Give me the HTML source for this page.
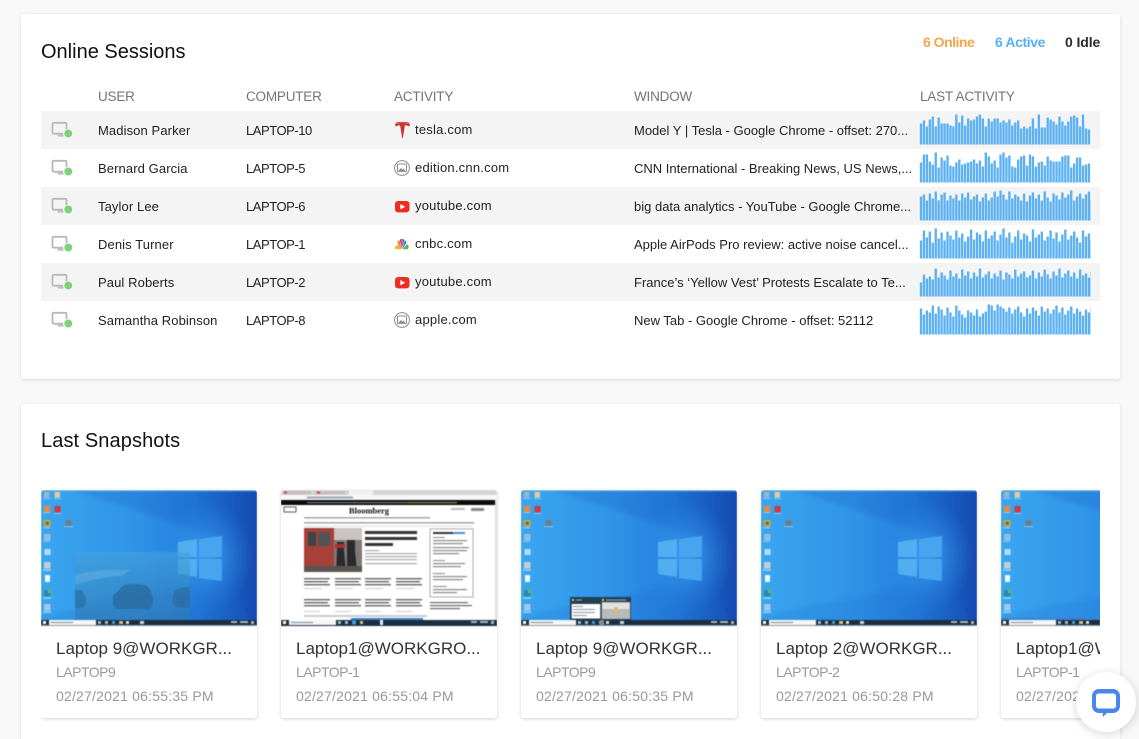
<!DOCTYPE html>
<html lang="en">
<head>
<meta charset="utf-8">
<title>Online Sessions</title>
<style>
html,body{margin:0;padding:0;width:1139px;height:739px;overflow:hidden}
body{position:relative;background:#f8f8f8;font-family:"Liberation Sans",sans-serif;color:#222}
.a{position:absolute;white-space:nowrap}
.card{position:absolute;background:#fff;border-radius:3px;box-shadow:0 1px 3px rgba(0,0,0,.13)}
.h1{font-size:20px;line-height:24px;color:#111}
.th{font-size:13.5px;line-height:16px;color:#757575;top:89px;letter-spacing:-.2px}
.row{position:absolute;left:41px;width:1059px;height:38px}
.alt{background:#f4f4f4}
.t{font-size:13px;line-height:16px;color:#222;letter-spacing:.1px}
.c{font-size:13px;line-height:16px;color:#222;letter-spacing:-.45px}
.w{font-size:13px;line-height:16px;color:#222}
.site{font-size:13px;line-height:16px;color:#222;letter-spacing:.22px}
.snap{position:absolute;top:490px;width:216px;height:228px;background:#fff;border-radius:3px;box-shadow:0 1px 3px rgba(0,0,0,.18);overflow:hidden}
.snap svg{display:block;width:216px;height:136px;filter:blur(.45px)}
.ti{position:absolute;left:15px;top:149px;font-size:17px;line-height:20px;color:#333;white-space:nowrap}
.s1{position:absolute;left:15px;top:174px;font-size:14px;line-height:16px;color:#999;white-space:nowrap;letter-spacing:-.5px}
.s2{position:absolute;left:15px;top:198px;font-size:14px;line-height:16px;color:#999;white-space:nowrap;letter-spacing:.2px}
.clip{position:absolute;left:41px;top:480px;width:1059px;height:259px;overflow:hidden}
.clip .snap{top:10px}
</style>
</head>
<body>
<svg width="0" height="0" style="position:absolute">
<defs>
<linearGradient id="bg" x1="0" y1="0" x2="1" y2="0"><stop offset="0" stop-color="#3aa5ef"/><stop offset=".45" stop-color="#2f93e8"/><stop offset=".72" stop-color="#227ada"/><stop offset="1" stop-color="#1549b2"/></linearGradient>
<radialGradient id="glow" cx=".5" cy=".5" r=".5"><stop offset="0" stop-color="#3fa6f4" stop-opacity=".8"/><stop offset="1" stop-color="#2b8ee6" stop-opacity="0"/></radialGradient>
<linearGradient id="car" x1="0" y1="0" x2="0" y2="1"><stop offset="0" stop-color="#45a2dc"/><stop offset=".5" stop-color="#3a8cc4"/><stop offset="1" stop-color="#3176ad"/></linearGradient>
<filter id="b3" x="-20%" y="-20%" width="140%" height="140%"><feGaussianBlur stdDeviation="2"/></filter>
<clipPath id="sparkclip"><rect x="919" y="100" width="172" height="240"/></clipPath>
<symbol id="wall" viewBox="0 0 216 136">
<rect width="216" height="136" fill="url(#bg)"/>
<polygon points="32,0 216,0 216,136 179,47" fill="#174fb6" opacity=".2" filter="url(#b3)"/>
<polygon points="179,90 216,136 0,136 0,126" fill="#1a66c8" opacity=".18" filter="url(#b3)"/>
<rect y="0" width="216" height="1.200" fill="#6fb2ea"/>
<ellipse cx="165" cy="66" rx="48" ry="56" fill="url(#glow)"/>
<polygon points="137,52 156,49 156,67 137,67" fill="#52aef0"/>
<polygon points="158,49 181,46 181,67 158,67" fill="#47a5f0"/>
<polygon points="137,69 156,69 156,87 137,84" fill="#52aef0"/>
<polygon points="158,69 181,69 181,91 158,88" fill="#47a5f0"/>
<g>
<rect x="3" y="2" width="5.500" height="5.500" fill="#9fb5c8"/><rect x="13.500" y="2" width="5.500" height="5.500" fill="#e8c9a0"/>
<rect x="3" y="16" width="6" height="6" fill="#e88a3c"/><rect x="13.500" y="16" width="6" height="6.500" fill="#d13a3a"/>
<rect x="3" y="30" width="6.500" height="6.500" fill="#e0a030"/><circle cx="6.200" cy="33.200" r="1.800" fill="#3a8c5c"/><rect x="24.500" y="30" width="6" height="6" fill="#6c7a90"/>
<rect x="3" y="44" width="6.500" height="6.500" fill="#8fc0e4"/>
<rect x="3.500" y="59" width="6" height="6" fill="#b8dcf4"/>
<rect x="3" y="72" width="6.500" height="6.500" fill="#c0d0dc"/>
<rect x="4" y="85" width="5" height="7" fill="#f4f8fb"/>
<rect x="3" y="100" width="6.500" height="6.500" fill="#2c8c9c"/><rect x="7" y="100" width="3" height="3" fill="#60c060"/>
<rect x="3" y="114" width="6.500" height="6.500" fill="#a0c8e8"/>
<g fill="#cfe6f8" opacity=".55"><rect x="2" y="8" width="7" height="1"/><rect x="13" y="8" width="7" height="1"/><rect x="2" y="22" width="7" height="1"/><rect x="13" y="23" width="7" height="1"/><rect x="2" y="37" width="7" height="1.400"/><rect x="23" y="36" width="9" height="1"/><rect x="2" y="51" width="7" height="1"/><rect x="2" y="79" width="8" height="2"/><rect x="2" y="107" width="8" height="2"/><rect x="2" y="121" width="8" height="2"/></g>
</g>
<rect y="130" width="216" height="6" fill="#1c2e40"/>
<rect x="0" y="135" width="216" height="1" fill="#8a97a4"/>
<rect x="2" y="131" width="3" height="3" fill="#fff"/>
<rect x="8" y="130" width="47" height="5" fill="#f4f6f8"/>
<rect x="10" y="132" width="22" height="1" fill="#7b8794"/>
<g fill="#aab6c2"><rect x="57" y="131" width="3" height="3"/><rect x="64" y="131" width="3" height="3"/><rect x="190" y="131" width="6" height="2"/><rect x="199" y="131" width="8" height="2"/><rect x="210" y="131" width="3" height="3"/><rect x="78" y="131" width="2" height="3"/></g>
<rect x="71" y="131" width="3" height="3" fill="#3aa0d8"/><rect x="79" y="131" width="3" height="3" fill="#e8c060"/><rect x="85" y="131" width="3" height="3" fill="#dcdcdc"/><rect x="99" y="131" width="4" height="3" fill="#cfd8e0"/>
</symbol>
</defs>
</svg>

<div class="card" style="left:21px;top:14px;width:1099px;height:365px"></div>
<div class="card" style="left:21px;top:404px;width:1099px;height:335px;border-radius:3px 3px 0 0"></div>

<div class="a h1" style="left:41px;top:40px">Online Sessions</div>
<div class="a" style="left:923px;top:34px;font-size:14px;line-height:16px;font-weight:bold;color:#f2a54c;letter-spacing:-.5px">6 Online</div>
<div class="a" style="left:995px;top:34px;font-size:14px;line-height:16px;font-weight:bold;color:#57aef2;letter-spacing:-.4px">6 Active</div>
<div class="a" style="left:1065px;top:34px;font-size:14px;line-height:16px;font-weight:bold;color:#2b2b2b;letter-spacing:-.1px">0 Idle</div>

<div class="a th" style="left:98px">USER</div>
<div class="a th" style="left:246px">COMPUTER</div>
<div class="a th" style="left:394px">ACTIVITY</div>
<div class="a th" style="left:634px">WINDOW</div>
<div class="a th" style="left:920px">LAST ACTIVITY</div>

<div class="row alt" style="top:111px"></div>
<div class="row alt" style="top:187px"></div>
<div class="row alt" style="top:263px"></div>

<div class="a t" style="left:98px;top:123px">Madison Parker</div>
<div class="a c" style="left:246px;top:123px">LAPTOP-10</div>
<div class="a site" style="left:415px;top:122px">tesla.com</div>
<div class="a w" style="left:634px;top:123px">Model Y | Tesla - Google Chrome - offset: 270...</div>

<div class="a t" style="left:98px;top:161px">Bernard Garcia</div>
<div class="a c" style="left:246px;top:161px">LAPTOP-5</div>
<div class="a site" style="left:415px;top:160px">edition.cnn.com</div>
<div class="a w" style="left:634px;top:161px">CNN International - Breaking News, US News,...</div>

<div class="a t" style="left:98px;top:199px">Taylor Lee</div>
<div class="a c" style="left:246px;top:199px">LAPTOP-6</div>
<div class="a site" style="left:415px;top:198px">youtube.com</div>
<div class="a w" style="left:634px;top:199px">big data analytics - YouTube - Google Chrome...</div>

<div class="a t" style="left:98px;top:237px">Denis Turner</div>
<div class="a c" style="left:246px;top:237px">LAPTOP-1</div>
<div class="a site" style="left:415px;top:236px">cnbc.com</div>
<div class="a w" style="left:634px;top:237px">Apple AirPods Pro review: active noise cancel...</div>

<div class="a t" style="left:98px;top:275px">Paul Roberts</div>
<div class="a c" style="left:246px;top:275px">LAPTOP-2</div>
<div class="a site" style="left:415px;top:274px">youtube.com</div>
<div class="a w" style="left:634px;top:275px">France’s ‘Yellow Vest’ Protests Escalate to Te...</div>

<div class="a t" style="left:98px;top:313px">Samantha Robinson</div>
<div class="a c" style="left:246px;top:313px">LAPTOP-8</div>
<div class="a site" style="left:415px;top:312px">apple.com</div>
<div class="a w" style="left:634px;top:313px">New Tab - Google Chrome - offset: 52112</div>

<svg class="a" style="left:0;top:0" width="1139" height="400" viewBox="0 0 1139 400">
<defs>
<g id="mon">
<path d="M66.500 129.500V124a1.200 1.200 0 0 0-1.200-1.200H53.700a1.200 1.200 0 0 0-1.200 1.200v8.500a1.200 1.200 0 0 0 1.200 1.200H63" fill="none" stroke="#b8b8b8" stroke-width="1.800"/>
<rect x="57.500" y="134.500" width="6" height="2.200" fill="#c0c0c0"/>
<circle cx="68.300" cy="133.500" r="4.800" fill="#fff" opacity=".75"/>
<circle cx="68.300" cy="133.500" r="4" fill="#7ed27c"/>
</g>
<g id="globe">
<circle cx="402" cy="168" r="7.400" fill="none" stroke="#8e8e8e" stroke-width="1"/>
<rect x="397.500" y="164" width="9" height="7.600" rx="1" fill="none" stroke="#8e8e8e" stroke-width="1"/>
<path d="M398.500 171l2.200-3 1.600 1.600 1.200-1.200 2 2.600z" fill="#8e8e8e"/>
</g>
<g id="yt">
<rect x="395" y="201" width="14.500" height="11.400" rx="3" fill="#ee2c22"/>
<path d="M400.300 204l5 2.700-5 2.700z" fill="#fff"/>
</g>
</defs>
<use href="#mon"/><use href="#mon" y="38"/><use href="#mon" y="76"/><use href="#mon" y="114"/><use href="#mon" y="152"/><use href="#mon" y="190"/>

<path d="M395 124.200c4.500-1.800 10.500-1.800 15 0l-.7 2.400c-1.300-.8-2.800-1.200-4.400-1.300l-2.100 13h-.6l-2.100-13c-1.600.1-3.100.5-4.400 1.300z" fill="#c9322e"/>
<path d="M395.500 122.800c4.400-1.300 9.600-1.300 14 0l-.2.800c-4.400-1.100-9.200-1.100-13.600 0z" fill="#c9322e"/>
<use href="#globe"/><use href="#globe" y="152"/>
<use href="#yt"/><use href="#yt" y="76"/>

<g>
<path d="M401.700 249.200h-5.200c-1.700 0-2.200-2.200-.8-3.100l3.400-2z" fill="#f5b43c"/>
<path d="M401.700 249.200l-3.800-6c-.9-1.400 0-3 1.500-2.800z" fill="#ef7a35"/>
<path d="M401.800 248.800l-2-8.400c0-1 1-1.700 2-1.200z" fill="#d8365c"/>
<path d="M402.200 248.800v-9.600c1-.5 2-.2 2 1.200z" fill="#7a5aa8"/>
<path d="M402.500 249.200l2-8.700c1.500-.2 2.400 1.400 1.500 2.800z" fill="#2a86c8"/>
<path d="M402.500 249.200l4.400-5c1.500.5 2.700 2.900.8 5z" fill="#62b24c"/>
</g>

<g clip-path="url(#sparkclip)"><g fill="none" stroke="#5cb1f5" stroke-width="2.400">
<path transform="translate(921,144.500) scale(.982,1)" d="M0 0v-21m3 21v-24m3 24v-18m3 18v-25m3 25v-28m3 28v-18m3 18v-27m3 27v-21m3 21v-21m3 21v-21m3 21v-19m3 19v-18m3 18v-30m3 30v-22m3 22v-29m3 29v-19m3 19v-26m3 26v-24m3 24v-25m3 25v-28m3 28v-30m3 30v-26m3 26v-18m3 18v-26m3 26v-23m3 23v-26m3 26v-26m3 26v-22m3 22v-24m3 24v-22m3 22v-25m3 25v-19m3 19v-22m3 22v-24m3 24v-16m3 16v-18m3 18v-16m3 16v-18m3 18v-26m3 26v-16m3 16v-30m3 30v-17m3 17v-17m3 17v-27m3 27v-25m3 25v-23m3 23v-20m3 20v-28m3 28v-23m3 23v-19m3 19v-23m3 23v-28m3 28v-29m3 29v-27m3 27v-18m3 18v-30m3 30v-16m3 16v-15"/>
<path transform="translate(921,182.500) scale(.982,1)" d="M0 0v-20m3 20v-28m3 28v-28m3 28v-21m3 21v-18m3 18v-30m3 30v-15m3 15v-25m3 25v-22m3 22v-27m3 27v-17m3 17v-16m3 16v-20m3 20v-23m3 23v-18m3 18v-19m3 19v-20m3 20v-21m3 21v-23m3 23v-19m3 19v-22m3 22v-16m3 16v-30m3 30v-26m3 26v-19m3 19v-22m3 22v-15m3 15v-28m3 28v-30m3 30v-25m3 25v-27m3 27v-16m3 16v-15m3 15v-23m3 23v-26m3 26v-27m3 27v-17m3 17v-28m3 28v-26m3 26v-16m3 16v-20m3 20v-21m3 21v-17m3 17v-26m3 26v-22m3 22v-21m3 21v-21m3 21v-21m3 21v-26m3 26v-27m3 27v-27m3 27v-15m3 15v-19m3 19v-25m3 25v-25m3 25v-17m3 17v-18m3 18v-19"/>
<path transform="translate(921,220.500) scale(.982,1)" d="M0 0v-24m3 24v-26m3 26v-20m3 20v-27m3 27v-22m3 22v-29m3 29v-20m3 20v-26m3 26v-28m3 28v-20m3 20v-25m3 25v-22m3 22v-26m3 26v-20m3 20v-27m3 27v-23m3 23v-28m3 28v-21m3 21v-24m3 24v-26m3 26v-19m3 19v-23m3 23v-27m3 27v-20m3 20v-23m3 23v-29m3 29v-24m3 24v-30m3 30v-26m3 26v-21m3 21v-29m3 29v-22m3 22v-26m3 26v-24m3 24v-20m3 20v-27m3 27v-19m3 19v-25m3 25v-28m3 28v-22m3 22v-26m3 26v-20m3 20v-29m3 29v-23m3 23v-19m3 19v-27m3 27v-25m3 25v-21m3 21v-28m3 28v-23m3 23v-26m3 26v-30m3 30v-20m3 20v-24m3 24v-27m3 27v-22m3 22v-26m3 26v-29m3 29v-21m3 21v-25"/>
<path transform="translate(921,258.500) scale(.982,1)" d="M0 0v-18m3 18v-28m3 28v-21m3 21v-27m3 27v-16m3 16v-30m3 30v-20m3 20v-26m3 26v-18m3 18v-27m3 27v-23m3 23v-19m3 19v-28m3 28v-21m3 21v-25m3 25v-17m3 17v-22m3 22v-29m3 29v-19m3 19v-26m3 26v-24m3 24v-17m3 17v-28m3 28v-20m3 20v-23m3 23v-27m3 27v-18m3 18v-24m3 24v-30m3 30v-21m3 21v-26m3 26v-16m3 16v-22m3 22v-28m3 28v-19m3 19v-25m3 25v-23m3 23v-17m3 17v-29m3 29v-21m3 21v-24m3 24v-27m3 27v-18m3 18v-22m3 22v-28m3 28v-20m3 20v-26m3 26v-17m3 17v-24m3 24v-29m3 29v-19m3 19v-23m3 23v-27m3 27v-21m3 21v-16m3 16v-28m3 28v-22m3 22v-25m3 25v-18m3 18v-23"/>
<path transform="translate(921,296.500) scale(.982,1)" d="M0 0v-14m3 14v-22m3 22v-18m3 18v-20m3 20v-17m3 17v-28m3 28v-19m3 19v-24m3 24v-21m3 21v-17m3 17v-26m3 26v-20m3 20v-23m3 23v-18m3 18v-27m3 27v-21m3 21v-25m3 25v-18m3 18v-24m3 24v-20m3 20v-28m3 28v-19m3 19v-22m3 22v-25m3 25v-18m3 18v-23m3 23v-20m3 20v-26m3 26v-17m3 17v-24m3 24v-22m3 22v-18m3 18v-27m3 27v-20m3 20v-23m3 23v-25m3 25v-19m3 19v-21m3 21v-26m3 26v-18m3 18v-24m3 24v-20m3 20v-27m3 27v-22m3 22v-18m3 18v-25m3 25v-21m3 21v-28m3 28v-19m3 19v-23m3 23v-26m3 26v-20m3 20v-24m3 24v-18m3 18v-27m3 27v-21m3 21v-23m3 23v-19m3 19v-25"/>
<path transform="translate(921,334.500) scale(.982,1)" d="M0 0v-26m3 26v-20m3 20v-24m3 24v-22m3 22v-29m3 29v-21m3 21v-28m3 28v-25m3 25v-19m3 19v-27m3 27v-22m3 22v-18m3 18v-29m3 29v-24m3 24v-20m3 20v-17m3 17v-24m3 24v-22m3 22v-19m3 19v-25m3 25v-18m3 18v-21m3 21v-23m3 23v-30m3 30v-29m3 29v-24m3 24v-30m3 30v-28m3 28v-26m3 26v-23m3 23v-27m3 27v-21m3 21v-25m3 25v-28m3 28v-22m3 22v-18m3 18v-26m3 26v-21m3 21v-27m3 27v-24m3 24v-19m3 19v-28m3 28v-23m3 23v-26m3 26v-21m3 21v-25m3 25v-29m3 29v-22m3 22v-27m3 27v-20m3 20v-24m3 24v-28m3 28v-21m3 21v-26m3 26v-23m3 23v-19m3 19v-25m3 25v-22m3 22v-27m3 27v-20m3 20v-24"/>
</g></g>
</svg>

<div class="a h1" style="left:41px;top:429px;letter-spacing:.1px">Last Snapshots</div>

<div class="clip">
<div class="snap" style="left:0">
<svg viewBox="0 0 216 136">
<use href="#wall" width="216" height="136"/>
<rect x="34" y="62" width="115" height="68" fill="url(#car)" opacity=".6"/>
<path d="M72 106c2-3 5-4 7-7 2-4 7-5 14-5 8 0 13 1 16 5l2 5c1 3 1.500 6 .5 10-.5 3-1 4-3 5H76c-3-1-4-4-4-8z" fill="#2a6a9e" opacity=".75"/>
<path d="M34 100h6c3 3 5 7 5 12-.5 4-2 5-5 6h-6z" fill="#2a6a9e" opacity=".6"/>
<path d="M133 102c3-4 10-5 16-5v20c-6 1-13 1-16-1-2-4-2-10 0-14z" fill="#2a6a9e" opacity=".65"/>
<path d="M34 85c20-5 40-6 55-5l-8 6c-15 0-30 4-47 9z" fill="#8cc4e6" opacity=".3"/>
</svg>
<div class="ti">Laptop 9@WORKGR...</div><div class="s1">LAPTOP9</div><div class="s2">02/27/2021 06:55:35 PM</div>
</div>

<div class="snap" style="left:240px">
<svg viewBox="0 0 216 136">
<rect width="216" height="136" fill="#fff"/>
<rect width="216" height="5" fill="#d4d4d4"/>
<rect x="2" y="1" width="28" height="3.500" fill="#c9bcbc"/><rect x="34" y="1" width="30" height="3.500" fill="#c8bcbc"/><rect x="68" y="0.500" width="24" height="4.500" fill="#f2f2f2"/>
<rect x="3" y="1.500" width="3" height="2" fill="#d0413a"/><rect x="36" y="1.500" width="3" height="2" fill="#d0413a"/>
<rect y="5" width="216" height="5" fill="#f7f7f7"/><rect x="26" y="6.500" width="46" height="2" fill="#9aa6b2"/>
<rect y="10" width="214" height="5" fill="#0c0c0c"/><rect x="26" y="12" width="100" height="1.200" fill="#7a7a7a"/><rect x="126" y="12" width="50" height="1.200" fill="#8f8f50"/>
<rect x="214" y="10" width="2" height="120" fill="#dcdcdc"/>
<text x="88" y="23.500" text-anchor="middle" font-family="Liberation Serif,serif" font-weight="bold" font-size="8.500" fill="#111">Bloomberg</text>
<rect x="3" y="17" width="12" height="5" fill="#fff" stroke="#333" stroke-width=".8"/>
<rect x="190" y="18" width="13" height="3" fill="#888"/><rect x="170" y="18" width="14" height="2" fill="#bbb"/>
<g fill="#aaa"><rect x="23" y="27" width="126" height="1.600"/><rect x="23" y="32" width="170" height="1.600"/></g>
<rect x="23" y="36" width="169" height=".6" fill="#ccc"/>
<rect x="23" y="38" width="58" height="44" fill="#7e7a78"/>
<rect x="23" y="38" width="30" height="38" fill="#a8403a"/>
<rect x="27" y="42" width="8" height="14" fill="#3e4448"/><rect x="37" y="42" width="12" height="14" fill="#4e5458"/>
<rect x="53" y="38" width="28" height="12" fill="#c9c4c0"/>
<path d="M56 52h7v8l2 22h-10l1-22zM66 50h8v10l2 22H66z" fill="#2a2a2e"/>
<rect x="54" y="54" width="10" height="4" fill="#b03030"/>
<rect x="23" y="76" width="58" height="6" fill="#5a5450"/>
<g fill="#333"><rect x="84" y="41" width="52" height="3"/><rect x="84" y="47" width="52" height="3"/><rect x="84" y="53" width="28" height="3"/></g>
<g fill="#aaa"><rect x="84" y="60" width="14" height="1.200"/><rect x="84" y="63" width="52" height="1.200"/><rect x="84" y="66" width="52" height="1.200"/><rect x="84" y="69" width="52" height="1.200"/><rect x="84" y="73" width="52" height="1.200"/></g>
<rect x="149" y="39" width="43" height="68" fill="#fff" stroke="#888" stroke-width=".7"/>
<rect x="152" y="42" width="20" height="2" fill="#333"/><rect x="172" y="42" width="12" height="2" fill="#4a8ce0"/>
<g fill="#888"><rect x="152" y="47" width="12" height="1"/><rect x="152" y="50" width="34" height="1.200"/><rect x="152" y="53" width="30" height="1.200"/><rect x="152" y="57" width="36" height="1.200"/><rect x="152" y="60" width="34" height="1.200"/><rect x="152" y="63" width="26" height="1.200"/><rect x="152" y="70" width="12" height="1"/><rect x="152" y="73" width="32" height="1.200"/><rect x="152" y="76" width="28" height="1.200"/><rect x="152" y="83" width="12" height="1"/><rect x="152" y="86" width="34" height="1.200"/><rect x="152" y="89" width="30" height="1.200"/><rect x="152" y="96" width="14" height="1"/><rect x="152" y="99" width="34" height="1.200"/><rect x="152" y="102" width="24" height="1.200"/></g>
<g fill="#666">
<rect x="23" y="88" width="26" height="1.400"/><rect x="23" y="91" width="24" height="1.400"/><rect x="23" y="94" width="26" height="1.400"/>
<rect x="54" y="88" width="26" height="1.400"/><rect x="54" y="91" width="24" height="1.400"/><rect x="54" y="94" width="26" height="1.400"/>
<rect x="84" y="88" width="26" height="1.400"/><rect x="84" y="91" width="24" height="1.400"/><rect x="84" y="94" width="26" height="1.400"/>
<rect x="115" y="88" width="26" height="1.400"/><rect x="115" y="91" width="24" height="1.400"/><rect x="115" y="94" width="26" height="1.400"/>
<rect x="23" y="109" width="26" height="1.400"/><rect x="23" y="112" width="24" height="1.400"/><rect x="23" y="115" width="26" height="1.400"/>
<rect x="54" y="109" width="26" height="1.400"/><rect x="54" y="112" width="24" height="1.400"/><rect x="54" y="115" width="26" height="1.400"/>
<rect x="84" y="109" width="26" height="1.400"/><rect x="84" y="112" width="24" height="1.400"/><rect x="84" y="115" width="26" height="1.400"/>
<rect x="115" y="109" width="26" height="1.400"/><rect x="115" y="112" width="24" height="1.400"/><rect x="115" y="115" width="26" height="1.400"/>
<rect x="149" y="112" width="38" height="1.200"/><rect x="149" y="115" width="42" height="1.200"/><rect x="149" y="118" width="30" height="1.200"/>
</g>
<g fill="#ccc"><rect x="23" y="98" width="18" height="1"/><rect x="54" y="98" width="18" height="1"/><rect x="84" y="98" width="18" height="1"/><rect x="115" y="98" width="18" height="1"/><rect x="23" y="121" width="16" height="1"/><rect x="54" y="121" width="16" height="1"/><rect x="84" y="121" width="16" height="1"/><rect x="115" y="121" width="16" height="1"/><rect x="23" y="125" width="123" height="2"/></g>
<rect x="70" y="128" width="72" height="2" fill="#3a82d0"/>
<rect y="130" width="216" height="6" fill="#1c2e40"/>
<rect x="2" y="131" width="3" height="3" fill="#fff"/>
<rect x="8" y="130" width="47" height="5" fill="#f4f6f8"/>
<rect x="10" y="132" width="22" height="1" fill="#7b8794"/>
<g fill="#aab6c2"><rect x="57" y="131" width="3" height="3"/><rect x="64" y="131" width="3" height="3"/><rect x="190" y="131" width="6" height="2"/><rect x="199" y="131" width="8" height="2"/><rect x="210" y="131" width="3" height="3"/></g>
<rect x="71" y="130.500" width="4" height="4" fill="#3aa0d8"/><rect x="79" y="131" width="3" height="3" fill="#e8c060"/><rect x="99" y="130" width="3" height="5" fill="#e8eef4"/>
</svg>
<div class="ti">Laptop1@WORKGRO...</div><div class="s1">LAPTOP-1</div><div class="s2">02/27/2021 06:55:04 PM</div>
</div>

<div class="snap" style="left:480px">
<svg viewBox="0 0 216 136">
<use href="#wall" width="216" height="136"/>
<rect x="49" y="107" width="61" height="23" fill="#23404f"/>
<rect x="50.700" y="114" width="28.500" height="14.500" fill="#fff"/>
<g fill="#8a96a0"><rect x="52" y="116" width="10" height="1"/><rect x="52" y="119" width="22" height="1"/><rect x="52" y="122" width="22" height="1"/><rect x="52" y="125" width="14" height="1"/></g>
<rect x="80.700" y="112" width="28.500" height="17" fill="#b9b9b9"/>
<rect x="81.500" y="113" width="27" height="6" fill="#e2e2e2"/>
<rect x="93.500" y="117" width="3" height="6" fill="#e0c050"/>
<rect x="51" y="109" width="2" height="2" fill="#e8c060"/><rect x="81" y="109" width="2" height="2" fill="#e8c060"/>
<rect x="55" y="109.500" width="6" height="1" fill="#9fb0bc"/><rect x="85" y="109.500" width="20" height="1" fill="#9fb0bc"/>
<rect x="79" y="130" width="4" height="6" fill="#7f8b96"/>
</svg>
<div class="ti">Laptop 9@WORKGR...</div><div class="s1">LAPTOP9</div><div class="s2">02/27/2021 06:50:35 PM</div>
</div>

<div class="snap" style="left:720px">
<svg viewBox="0 0 216 136"><use href="#wall" width="216" height="136"/></svg>
<div class="ti">Laptop 2@WORKGR...</div><div class="s1">LAPTOP-2</div><div class="s2">02/27/2021 06:50:28 PM</div>
</div>

<div class="snap" style="left:960px">
<svg viewBox="0 0 216 136"><use href="#wall" width="216" height="136"/><rect x="0" y="128" width="216" height="2" fill="#3a82d0"/></svg>
<div class="ti">Laptop1@WORKGRO...</div><div class="s1">LAPTOP-1</div><div class="s2">02/27/2021 06:45:04 PM</div>
</div>
</div>

<div class="a" style="left:1076px;top:672px;width:60px;height:60px;border-radius:50%;background:#fff;box-shadow:0 2px 10px rgba(0,0,0,.16)"></div>
<svg class="a" style="left:1085px;top:683px" width="40" height="40" viewBox="1085 683 40 40">
<path fill-rule="evenodd" d="M1099 689h14a7 7 0 0 1 7 7v10a7 7 0 0 1-7 7h-6l-4.200 4v-4H1099a7 7 0 0 1-7-7v-10a7 7 0 0 1 7-7zm-.5 4.500a2.500 2.500 0 0 0-2.500 2.500v10a2.500 2.500 0 0 0 2.500 2.500h15a2.500 2.500 0 0 0 2.500-2.500v-10a2.500 2.500 0 0 0-2.500-2.500z" fill="#4a86ec"/>
</svg>
</body>
</html>
